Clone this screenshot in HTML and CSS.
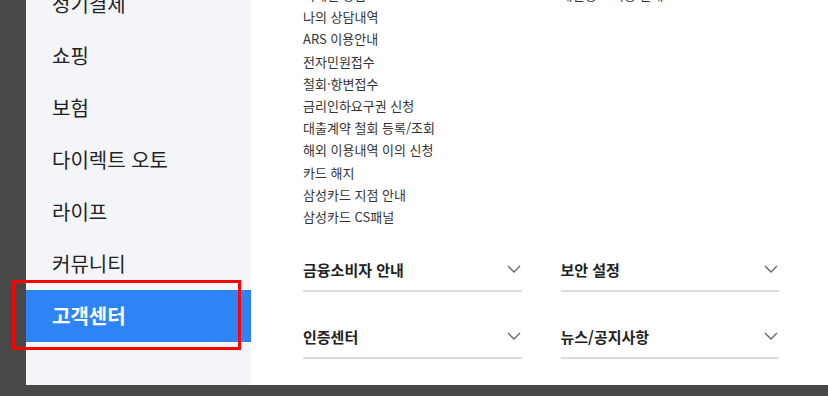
FILE: index.html
```html
<!DOCTYPE html>
<html lang="ko">
<head>
    <meta charset="UTF-8">
    <meta name="viewport" content="width=device-width, initial-scale=1.0">
    <title>고객센터 메뉴</title>
    <link rel="stylesheet" href="styles.css">
</head>
<body>
    <div class="panel">
        <ul class="sideMenu">
            <li>정기결제</li>
            <li>쇼핑</li>
            <li>보험</li>
            <li>다이렉트 오토</li>
            <li>라이프</li>
            <li>커뮤니티</li>
            <li class="active">고객센터</li>
        </ul>

        <div class="content">
            <div class="linkGrid">
                <ul class="links">
                    <li>이메일 상담</li>
                    <li>나의 상담내역</li>
                    <li>ARS 이용안내</li>
                    <li>전자민원접수</li>
                    <li>철회·항변접수</li>
                    <li>금리인하요구권 신청</li>
                    <li>대출계약 철회 등록/조회</li>
                    <li>해외 이용내역 이의 신청</li>
                    <li>카드 해지</li>
                    <li>삼성카드 지점 안내</li>
                    <li>삼성카드 CS패널</li>
                </ul>
                <ul class="links">
                    <li>개인정보 이용 안내</li>
                </ul>
            </div>

            <div class="accordions">
                <div class="accItem">
                    <span>금융소비자 안내</span>
                    <svg class="chevron" width="14" height="8" viewBox="0 0 14 8"><polyline points="1,1 7,7 13,1"/></svg>
                </div>
                <div class="accItem">
                    <span>보안 설정</span>
                    <svg class="chevron" width="14" height="8" viewBox="0 0 14 8"><polyline points="1,1 7,7 13,1"/></svg>
                </div>
                <div class="accItem">
                    <span>인증센터</span>
                    <svg class="chevron" width="14" height="8" viewBox="0 0 14 8"><polyline points="1,1 7,7 13,1"/></svg>
                </div>
                <div class="accItem">
                    <span>뉴스/공지사항</span>
                    <svg class="chevron" width="14" height="8" viewBox="0 0 14 8"><polyline points="1,1 7,7 13,1"/></svg>
                </div>
            </div>
        </div>
    </div>

    <div class="highlight"></div>
</body>
</html>
```

FILE: styles.css
```css
body {
    margin: 0;
    background: #484848;
    font-family: "Noto Sans CJK KR", "Noto Sans", sans-serif;
    height: 396px;
    overflow: hidden;
    position: relative;
}

ul {
    list-style: none;
    margin: 0;
    padding: 0;
}

.panel {
    margin-left: 26px;
    height: 385px;
    display: flex;
    overflow: hidden;
    background: #fff;
}

.sideMenu {
    width: 225px;
    flex-shrink: 0;
    background: #f4f5f9;
    padding-top: 0;
}

.sideMenu li {
    height: 52px;
    line-height: 52px;
    padding-left: 26px;
    font-size: 20px;
    color: #222;
}

.sideMenu li:first-child {
    margin-top: -22px;
}

.sideMenu li.active {
    background: #2e83f6;
    color: #fff;
    font-weight: bold;
}

.content {
    flex: 1;
    padding-left: 52px;
    padding-right: 49px;
}

.linkGrid {
    display: grid;
    grid-template-columns: 1fr 1fr;
    column-gap: 39px;
    margin-top: -16px;
}

.links li {
    font-size: 13px;
    line-height: 22.2px;
    color: #333;
    white-space: nowrap;
}

.accordions {
    display: grid;
    grid-template-columns: 1fr 1fr;
    column-gap: 39px;
    row-gap: 23px;
    margin-top: 20px;
}

.accItem {
    display: flex;
    justify-content: space-between;
    align-items: center;
    height: 42px;
    border-bottom: 2px solid #dcdcdc;
    font-size: 15px;
    font-weight: bold;
    color: #222;
}

.chevron {
    margin-right: 1px;
}

.chevron polyline {
    fill: none;
    stroke: #666;
    stroke-width: 1.4;
}

.highlight {
    position: absolute;
    left: 12px;
    top: 280px;
    width: 223px;
    height: 64px;
    border: 3px solid #ff0000;
}
```
